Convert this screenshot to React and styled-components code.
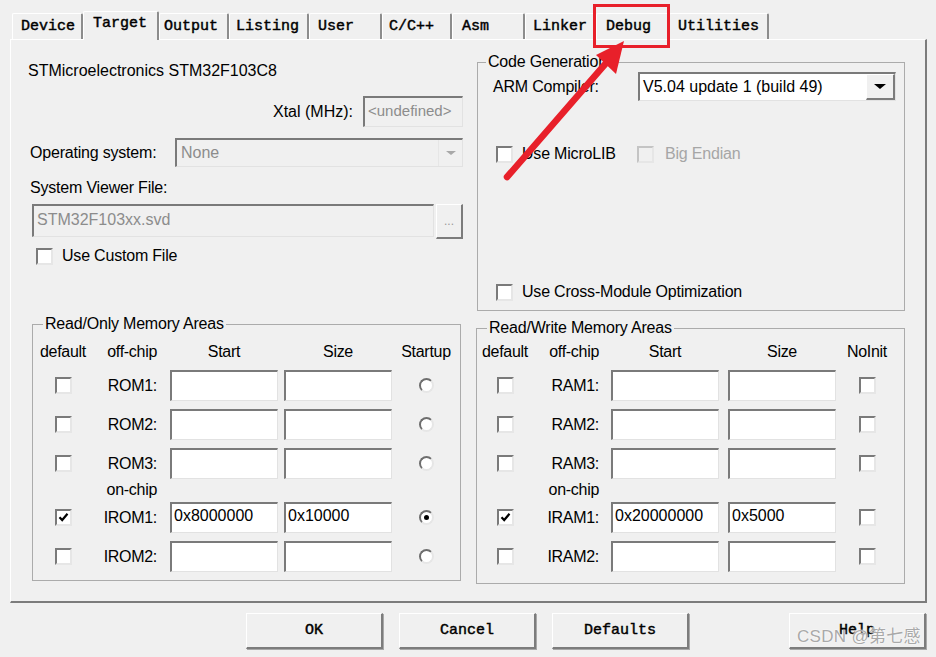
import React from 'react';
import styled, { createGlobalStyle } from 'styled-components';

const GlobalStyle = createGlobalStyle`
  html, body { margin: 0; padding: 0; background: #f0f0f0; }
  body { font-family: "Liberation Sans", Arial, sans-serif; }
  #root { width: 936px; height: 657px; }
`;

const Dialog = styled.div`
  position: relative;
  box-sizing: border-box;
  width: 936px;
  height: 657px;
  overflow: hidden;
  padding-top: 11px;
  background: #f0f0f0;
  font-family: "Liberation Sans", Arial, sans-serif;
  font-size: 16px;
  color: #000;
`;

const TabStrip = styled.div`
  position: relative;
  z-index: 1;
  display: flex;
  align-items: flex-end;
  height: 28px;
  margin-left: 12px;
`;

const Tab = styled.div`
  box-sizing: border-box;
  flex: none;
  width: ${(p) => p.$w}px;
  height: ${(p) => (p.$active ? 29 : 26)}px;
  margin-bottom: ${(p) => (p.$active ? -1 : 0)}px;
  padding: ${(p) => (p.$active ? 3 : 4)}px 0 0 ${(p) => p.$pad}px;
  background: #f0f0f0;
  border-top: 1px solid #fff;
  border-left: 1px solid #fff;
  border-right: 2px solid #8c8c8c;
  border-radius: 2px 2px 0 0;
  font-family: "Liberation Mono", "Courier New", monospace;
  font-size: 15px;
  font-weight: normal;
  -webkit-text-stroke: 0.45px #000;
  line-height: 18px;
  white-space: pre;
`;

const Panel = styled.div`
  box-sizing: border-box;
  margin-left: 10px;
  width: 917px;
  height: 564px;
  border-top: 1px solid #fff;
  border-left: 1px solid #fff;
  border-right: 2px solid #7c7c7c;
  border-bottom: 2px solid #7c7c7c;
  display: flex;
  flex-direction: column;
`;

const TopRow = styled.div`
  display: flex;
  align-items: flex-start;
`;

const BottomRow = styled.div`
  display: flex;
  align-items: flex-start;
`;

const LeftTop = styled.div`
  display: flex;
  flex-direction: column;
  width: 435px;
  margin: 21px 0 0 17px;
`;

const Text = styled.div`
  line-height: 20px;
  white-space: nowrap;
  margin-left: ${(p) => p.$ml || 0}px;
  margin-top: ${(p) => p.$mt || 0}px;
  width: ${(p) => (p.$w ? `${p.$w}px` : 'auto')};
  letter-spacing: ${(p) => (p.$tight ? '-0.2px' : '0')};
`;

const Row = styled.div`
  display: flex;
  align-items: ${(p) => p.$align || 'center'};
  justify-content: ${(p) => p.$justify || 'flex-start'};
  margin-top: ${(p) => p.$mt || 0}px;
  padding-left: ${(p) => p.$pl || 0}px;
  gap: ${(p) => p.$gap || 0}px;
  width: ${(p) => (p.$w ? `${p.$w}px` : 'auto')};
  flex: none;
  white-space: nowrap;
`;

const Sunken = styled.div`
  box-sizing: border-box;
  flex: none;
  width: ${(p) => p.$w}px;
  height: ${(p) => p.$h}px;
  margin-left: ${(p) => (p.$auto ? 'auto' : `${p.$ml || 0}px`)};
  border-top: 2px solid #7a7a7a;
  border-left: 2px solid #7a7a7a;
  border-right: 1px solid #e2e2e2;
  border-bottom: 1px solid #e2e2e2;
  background: ${(p) => (p.$disabled ? '#f0f0f0' : '#fff')};
  color: ${(p) => (p.$disabled ? '#8c8c8c' : '#000')};
  font-size: ${(p) => p.$fs || 16}px;
  line-height: 20px;
  padding: ${(p) => p.$pt || 3}px 0 0 ${(p) => p.$px || 2}px;
  white-space: nowrap;
  display: flex;
  align-items: flex-start;
`;

const DropButton = styled.div`
  box-sizing: border-box;
  margin-left: auto;
  align-self: stretch;
  width: ${(p) => p.$w}px;
  margin-top: ${(p) => -(p.$pt || 0)}px;
  display: flex;
  align-items: center;
  justify-content: center;
  background: #f0f0f0;
  ${(p) =>
    p.$raised
      ? `border-top: 1px solid #fff; border-left: 1px solid #fff; border-right: 2px solid #7c7c7c; border-bottom: 2px solid #7c7c7c;`
      : `border-left: 1px solid #e6e6e6;`}
`;

const Arrow = styled.span`
  width: 0;
  height: 0;
  border-left: ${(p) => p.$s}px solid transparent;
  border-right: ${(p) => p.$s}px solid transparent;
  border-top: ${(p) => Math.round(p.$s * 0.8)}px solid ${(p) => p.$c};
`;

const RaisedButton = styled.div`
  box-sizing: border-box;
  flex: none;
  width: ${(p) => p.$w}px;
  height: ${(p) => p.$h}px;
  margin-left: ${(p) => p.$ml || 0}px;
  background: #f0f0f0;
  border-top: 1px solid #fff;
  border-left: 1px solid #fff;
  border-right: 2px solid #7c7c7c;
  border-bottom: 2px solid #7c7c7c;
  display: flex;
  align-items: center;
  justify-content: center;
  color: #9a9a9a;
  font-size: 12px;
`;

const Box = styled.span`
  box-sizing: border-box;
  flex: none;
  display: inline-flex;
  align-items: center;
  justify-content: center;
  width: 17px;
  height: 17px;
  border-top: 2px solid ${(p) => (p.$disabled ? '#c4c4c4' : '#7a7a7a')};
  border-left: 2px solid ${(p) => (p.$disabled ? '#c4c4c4' : '#7a7a7a')};
  border-right: 2px solid #e6e6e6;
  border-bottom: 2px solid #e6e6e6;
  background: ${(p) => (p.$disabled ? '#f0f0f0' : '#fff')};
`;

const CheckBox = ({ checked, disabled }) => (
  <Box $disabled={disabled}>
    {checked && (
      <svg width="11" height="11" viewBox="0 0 11 11">
        <path d="M1.5 5.2 L4.2 8 L9.5 1.8" fill="none" stroke="#000" strokeWidth="2.2" />
      </svg>
    )}
  </Box>
);

const Radio = styled.span`
  box-sizing: border-box;
  display: inline-flex;
  align-items: center;
  justify-content: center;
  width: 15px;
  height: 15px;
  border-radius: 50%;
  border: 2px solid;
  border-color: #6e6e6e #e6e6e6 #e6e6e6 #6e6e6e;
  background: #fff;
  &::after {
    content: '';
    display: ${(p) => (p.$on ? 'block' : 'none')};
    width: 5px;
    height: 5px;
    border-radius: 50%;
    background: #000;
  }
`;

const CheckLabel = styled.span`
  margin-left: ${(p) => p.$gap}px;
  line-height: 20px;
  letter-spacing: -0.2px;
  color: ${(p) => (p.$dim ? '#a6a6a6' : '#000')};
`;

const Group = styled.fieldset`
  box-sizing: border-box;
  flex: none;
  min-width: 0;
  margin: ${(p) => p.$mt}px 0 0 ${(p) => p.$ml}px;
  padding: ${(p) => p.$pt || 0}px 0 0 ${(p) => p.$pl || 0}px;
  width: ${(p) => p.$w}px;
  height: ${(p) => p.$h}px;
  border: 1px solid #ababab;
  display: flex;
  flex-direction: column;
`;

const Legend = styled.legend`
  margin-left: ${(p) => p.$ml}px;
  padding: 0 2px;
  font-size: 16px;
  line-height: 20px;
  letter-spacing: -0.2px;
  white-space: nowrap;
`;

const GroupBody = styled.div`
  flex: 1;
  display: flex;
  flex-direction: column;
  padding-bottom: ${(p) => p.$pb || 0}px;
`;

const MemGrid = styled.div`
  display: grid;
  grid-template-columns: ${(p) => p.$cols};
  align-items: center;
  height: ${(p) => p.$h}px;
  margin-top: ${(p) => p.$mt}px;
`;

const HeadCell = styled.span`
  line-height: 20px;
  white-space: nowrap;
  letter-spacing: -0.3px;
  text-align: ${(p) => p.$align || 'center'};
  justify-self: ${(p) => p.$self || 'stretch'};
  width: ${(p) => (p.$w ? `${p.$w}px` : 'auto')};
`;

const Cell = styled.div`
  display: flex;
  justify-content: ${(p) => p.$justify || 'center'};
  align-items: center;
`;

const MemField = styled.div`
  box-sizing: border-box;
  width: 108px;
  height: 31px;
  border-top: 2px solid #7a7a7a;
  border-left: 2px solid #7a7a7a;
  border-right: 1px solid #e2e2e2;
  border-bottom: 1px solid #e2e2e2;
  background: #fff;
  padding: 2px 0 0 2px;
  line-height: 20px;
  white-space: nowrap;
`;

const ButtonBar = styled.div`
  display: flex;
  margin: 10px 0 0 10px;
  width: 916px;
  padding-left: 236px;
  box-sizing: border-box;
  gap: 16px;
`;

const DialogButton = styled.div`
  box-sizing: border-box;
  width: 137px;
  height: 36px;
  margin-left: ${(p) => (p.$push ? 'auto' : '0')};
  background: #f0f0f0;
  border-top: 1px solid #fff;
  border-left: 1px solid #fff;
  border-right: 2px solid #7c7c7c;
  border-bottom: 2px solid #7c7c7c;
  box-shadow: 1px 1px 0 #a8a8a8;
  display: flex;
  align-items: center;
  justify-content: center;
  font-family: "Liberation Mono", "Courier New", monospace;
  font-size: 15px;
  -webkit-text-stroke: 0.45px #000;
`;

const Highlight = styled.div`
  position: absolute;
  left: 593px;
  top: 4px;
  width: 77px;
  height: 44px;
  box-sizing: border-box;
  border: 3px solid #e8202a;
  pointer-events: none;
  z-index: 3;
`;

const Overlay = styled.svg`
  position: absolute;
  left: 0;
  top: 0;
  pointer-events: none;
  z-index: 4;
`;

const Watermark = styled.div`
  position: absolute;
  left: 797px;
  top: 627px;
  font-family: "Liberation Sans", "Noto Sans CJK SC", sans-serif;
  font-size: 17px;
  line-height: 20px;
  color: #a9a9a9;
  text-shadow: 0 0 1px #fff, 0 0 2px #fff;
  letter-spacing: 0.3px;
  pointer-events: none;
  z-index: 5;
`;

const tabs = [
  { t: 'Device', w: 71, pad: 8 },
  { t: 'Target', w: 76, pad: 9, active: true },
  { t: 'Output', w: 70, pad: 4 },
  { t: 'Listing', w: 80, pad: 6 },
  { t: 'User', w: 73, pad: 8 },
  { t: 'C/C++', w: 70, pad: 6 },
  { t: 'Asm', w: 73, pad: 9 },
  { t: 'Linker', w: 71, pad: 7 },
  { t: 'Debug', w: 73, pad: 9 },
  { t: 'Utilities', w: 100, pad: 8 },
];

const romRows = [
  { label: 'ROM1:' },
  { label: 'ROM2:' },
  { label: 'ROM3:' },
  { onchip: true },
  { label: 'IROM1:', start: '0x8000000', size: '0x10000', checked: true, on: true },
  { label: 'IROM2:' },
];

const ramRows = [
  { label: 'RAM1:' },
  { label: 'RAM2:' },
  { label: 'RAM3:' },
  { onchip: true },
  { label: 'IRAM1:', start: '0x20000000', size: '0x5000', checked: true },
  { label: 'IRAM2:' },
];

const MemoryGroup = ({ title, cols, lastHead, rows, radio, ...groupProps }) => (
  <Group {...groupProps}>
    <Legend $ml={7}>{title}</Legend>
    <GroupBody>
      <MemGrid $cols={cols} $h={20} $mt={0}>
        <HeadCell>default</HeadCell>
        <HeadCell $align="right">off-chip</HeadCell>
        <HeadCell $self="end" $w={108}>Start</HeadCell>
        <HeadCell $self="end" $w={108}>Size</HeadCell>
        <HeadCell>{lastHead}</HeadCell>
      </MemGrid>
      {rows.map((r, i) => {
        if (r.onchip) {
          return (
            <MemGrid key={i} $cols={cols} $h={22} $mt={0}>
              <span />
              <HeadCell $align="right">on-chip</HeadCell>
            </MemGrid>
          );
        }
        const mt = i === 4 ? 1 : 8;
        return (
          <MemGrid key={i} $cols={cols} $h={31} $mt={mt}>
            <Cell>
              <CheckBox checked={r.checked} />
            </Cell>
            <HeadCell $align="right">{r.label}</HeadCell>
            <Cell $justify="flex-end">
              <MemField>{r.start || ''}</MemField>
            </Cell>
            <Cell $justify="flex-end">
              <MemField>{r.size || ''}</MemField>
            </Cell>
            <Cell>{radio ? <Radio $on={r.on} /> : <CheckBox />}</Cell>
          </MemGrid>
        );
      })}
    </GroupBody>
  </Group>
);

export default function App() {
  return (
    <Dialog>
      <GlobalStyle />
      <TabStrip>
        {tabs.map((t) => (
          <Tab key={t.t} $w={t.w} $pad={t.pad} $active={t.active}>
            {t.t}
          </Tab>
        ))}
      </TabStrip>
      <Panel>
        <TopRow>
          <LeftTop>
            <Text>STMicroelectronics STM32F103C8</Text>
            <Row $mt={15} $justify="flex-end" $gap={10}>
              <span>Xtal (MHz):</span>
              <Sunken $w={100} $h={31} $disabled $fs={15} $pt={3} $px={3}>
                &lt;undefined&gt;
              </Sunken>
            </Row>
            <Row $mt={11}>
              <Text $ml={2} $tight>Operating system:</Text>
              <Sunken $w={288} $h={29} $auto $disabled $pt={3} $px={4}>
                None
                <DropButton $w={24} $pt={3}>
                  <Arrow $s={5} $c="#a8a8a8" />
                </DropButton>
              </Sunken>
            </Row>
            <Text $ml={2} $mt={11} $tight>System Viewer File:</Text>
            <Row $mt={6} $align="flex-start">
              <Sunken $w={402} $h={33} $ml={4} $disabled $pt={4} $px={3}>
                STM32F103xx.svd
              </Sunken>
              <RaisedButton $w={27} $h={35} $ml={2}>
                ...
              </RaisedButton>
            </Row>
            <Row $mt={7} $pl={8}>
              <CheckBox />
              <CheckLabel $gap={9}>Use Custom File</CheckLabel>
            </Row>
          </LeftTop>

          <Group $mt={12} $ml={14} $w={428} $h={259}>
            <Legend $ml={8}>Code Generation</Legend>
            <GroupBody $pb={8}>
              <Row $pl={15}>
                <Text $w={145} $tight>ARM Compiler:</Text>
                <Sunken $w={258} $h={29} $pt={3} $px={3}>
                  V5.04 update 1 (build 49)
                  <DropButton $w={29} $pt={3} $raised>
                    <Arrow $s={6} $c="#000" />
                  </DropButton>
                </Sunken>
              </Row>
              <Row $mt={43} $pl={18}>
                <Row $w={141}>
                  <CheckBox />
                  <CheckLabel $gap={9}>Use MicroLIB</CheckLabel>
                </Row>
                <CheckBox disabled />
                <CheckLabel $gap={11} $dim>
                  Big Endian
                </CheckLabel>
              </Row>
              <Row $pl={18} style={{ marginTop: 'auto' }}>
                <CheckBox />
                <CheckLabel $gap={9}>Use Cross-Module Optimization</CheckLabel>
              </Row>
            </GroupBody>
          </Group>
        </TopRow>

        <BottomRow>
          <MemoryGroup
            title="Read/Only Memory Areas"
            cols="54px 67px 121px 114px 68px"
            lastHead="Startup"
            rows={romRows}
            radio
            $mt={3}
            $ml={21}
            $w={429}
            $h={267}
            $pt={8}
            $pl={3}
          />
          <MemoryGroup
            title="Read/Write Memory Areas"
            cols="50px 69px 120px 117px 62px"
            lastHead="NoInit"
            rows={ramRows}
            $mt={7}
            $ml={15}
            $w={429}
            $h={266}
            $pt={4}
            $pl={3}
          />
        </BottomRow>
      </Panel>

      <ButtonBar>
        <DialogButton>OK</DialogButton>
        <DialogButton>Cancel</DialogButton>
        <DialogButton>Defaults</DialogButton>
        <DialogButton $push>Help</DialogButton>
      </ButtonBar>

      <Highlight />
      <Overlay width="936" height="657" viewBox="0 0 936 657">
        <line x1="507" y1="177" x2="607" y2="62" stroke="#e8202a" strokeWidth="6.5" strokeLinecap="round" />
        <polygon points="624,41 596,55 616,74" fill="#e8202a" />
      </Overlay>
      <Watermark>CSDN @第七感</Watermark>
    </Dialog>
  );
}
